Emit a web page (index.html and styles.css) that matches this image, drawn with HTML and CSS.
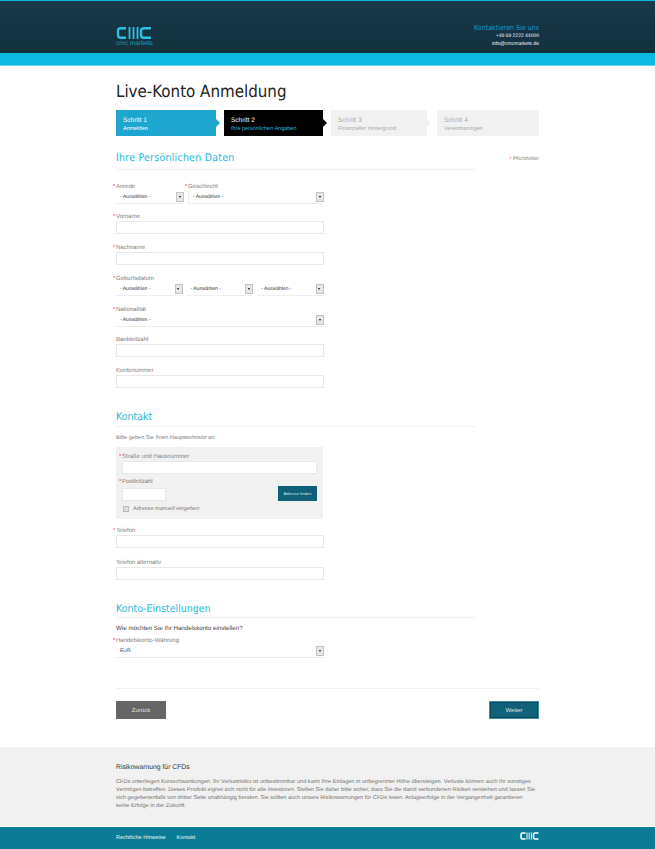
FILE: index.html
```html
<!DOCTYPE html>
<html lang="de">
<head>
    <meta charset="UTF-8">
    <title>Live-Konto Anmeldung</title>
    <link rel="stylesheet" href="styles.css">
</head>
<body>
    <!-- Header -->
    <header class="site-header">
        <div class="wrap header-inner">
            <div class="logo">
                <svg class="logo-mark" width="36" height="14" viewBox="0 0 36 14">
                    <path d="M10 2.200H5Q2 2.200 2 5V9Q2 11.800 5 11.800H10" fill="none" stroke="#2cc0e4" stroke-width="2.400"/>
                    <path d="M13.500 1V13M17.500 1V13M21.500 1V13" fill="none" stroke="#2cc0e4" stroke-width="1.800"/>
                    <path d="M35 2.200H28Q25 2.200 25 5V9Q25 11.800 28 11.800H35" fill="none" stroke="#2cc0e4" stroke-width="2.400"/>
                </svg>
                <span class="logo-text">cmc markets</span>
            </div>
            <div class="contact-box">
                <div class="contact-title">Kontaktieren Sie uns</div>
                <div>+49 69 2222 44000</div>
                <div>info@cmcmarkets.de</div>
            </div>
        </div>
    </header>
    <div class="header-band"></div>

    <main class="wrap">
        <h1>Live-Konto Anmeldung</h1>

        <!-- Steps -->
        <div class="steps">
            <div class="step step-done"><b>Schritt 1</b><span>Anmelden</span></div>
            <div class="step step-active"><b>Schritt 2</b><span>Ihre persönlichen Angaben</span></div>
            <div class="step step-third"><b>Schritt 3</b><span>Finanzieller Hintergrund</span></div>
            <div class="step step-last"><b>Schritt 4</b><span>Vereinbarungen</span></div>
        </div>

        <!-- Personal data -->
        <section class="personal">
            <div class="section-head head-first">
                <h2>Ihre Persönlichen Daten</h2>
                <div class="required-note"><i>*</i> Pflichtfelder</div>
            </div>
            <div class="row row-title">
                <div class="field field-title">
                    <label class="req">Anrede</label>
                    <div class="select"><span>- Auswählen -</span><em></em></div>
                </div>
                <div class="field field-gender">
                    <label class="req">Geschlecht</label>
                    <div class="select"><span>- Auswählen -</span><em></em></div>
                </div>
            </div>
            <div class="field gap-wide">
                <label class="req">Vorname</label>
                <div class="input"></div>
            </div>
            <div class="field gap-wide">
                <label class="req">Nachname</label>
                <div class="input"></div>
            </div>
            <div class="field gap-wide">
                <label class="req">Geburtsdatum</label>
                <div class="row row-date">
                    <div class="select"><span>- Auswählen -</span><em></em></div>
                    <div class="select"><span>- Auswählen -</span><em></em></div>
                    <div class="select"><span>- Auswählen -</span><em></em></div>
                </div>
            </div>
            <div class="field gap-date">
                <label class="req">Nationalität</label>
                <div class="select"><span>- Auswählen -</span><em></em></div>
            </div>
            <div class="field gap-wide">
                <label>Bankleitzahl</label>
                <div class="input"></div>
            </div>
            <div class="field gap-wide">
                <label>Kontonummer</label>
                <div class="input"></div>
            </div>
        </section>

        <!-- Contact -->
        <section class="contact">
            <div class="section-head"><h2>Kontakt</h2></div>
            <p class="hint">Bitte geben Sie Ihren Hauptwohnsitz an:</p>
            <div class="address-box">
                <div class="field">
                    <label class="req">Straße und Hausnummer</label>
                    <div class="input"></div>
                </div>
                <div class="field gap-zip">
                    <label class="req">Postleitzahl</label>
                    <div class="zip-row">
                        <div class="input input-zip"></div>
                        <button class="btn-find">Adresse finden</button>
                    </div>
                </div>
                <div class="manual"><span class="checkbox"></span>Adresse manuell eingeben</div>
            </div>
            <div class="field gap-phone">
                <label class="req">Telefon</label>
                <div class="input"></div>
            </div>
            <div class="field gap-date">
                <label>Telefon alternativ</label>
                <div class="input"></div>
            </div>
        </section>

        <!-- Account settings -->
        <section class="settings">
            <div class="section-head head-last"><h2>Konto-Einstellungen</h2></div>
            <p class="question">Wie möchten Sie Ihr Handelskonto einstellen?</p>
            <div class="field">
                <label class="req">Handelskonto-Währung</label>
                <div class="select"><span>EUR</span><em></em></div>
            </div>
        </section>

        <div class="actions">
            <button class="btn btn-back">Zurück</button>
            <button class="btn btn-next">Weiter</button>
        </div>
    </main>

    <!-- Risk warning -->
    <section class="risk">
        <div class="wrap">
            <h3>Risikowarnung für CFDs</h3>
            <p>CFDs unterliegen Kursschwankungen. Ihr Verlustrisiko ist unbestimmbar und kann Ihre Einlagen in unbegrenzter Höhe übersteigen. Verluste können auch Ihr sonstiges<br>Vermögen betreffen. Dieses Produkt eignet sich nicht für alle Investoren. Stellen Sie daher bitte sicher, dass Sie die damit verbundenen Risiken verstehen und lassen Sie<br>sich gegebenenfalls von dritter Seite unabhängig beraten. Sie sollten auch unsere Risikowarnungen für CFDs lesen. Anlageerfolge in der Vergangenheit garantieren<br>keine Erfolge in der Zukunft.</p>
        </div>
    </section>

    <footer class="site-footer">
        <div class="wrap footer-inner">
            <div class="footer-links"><a>Rechtliche Hinweise</a><a>Kontakt</a></div>
            <svg width="19" height="8" viewBox="0 0 19 8">
                <path d="M5.500 1H2.500Q1 1 1 2.500V5.500Q1 7 2.500 7H5.500" fill="none" stroke="#fff" stroke-width="1.500"/>
                <path d="M7 .5V7.500M9.200 .5V7.500M11.400 .5V7.500" fill="none" stroke="#fff"/>
                <path d="M18.500 1H15Q13.500 1 13.500 2.500V5.500Q13.500 7 15 7H18.500" fill="none" stroke="#fff" stroke-width="1.500"/>
            </svg>
        </div>
    </footer>
</body>
</html>
```

FILE: styles.css
```css
* {
    box-sizing: border-box;
}

body {
    margin: 0;
    font-family: 'Liberation Sans', Arial, sans-serif;
    font-size: 6px;
    color: #808080;
    background-color: #fff;
    text-rendering: geometricPrecision;
}

.wrap {
    width: 423px;
    margin: 0 auto;
}

/* Header */
.site-header {
    height: 53px;
    border-top: 1px solid #0fb5d8;
    background: linear-gradient(#17394a, #14303d);
}

.header-inner {
    display: flex;
    justify-content: space-between;
    align-items: flex-start;
}

.logo {
    margin-top: 25px;
    display: flex;
    flex-direction: column;
}

.logo-mark {
    display: block;
}

.logo-text {
    font-size: 6.500px;
    line-height: 7px;
    color: #1a9cbc;
}

.contact-box {
    margin-top: 23px;
    text-align: right;
    color: #fff;
    font-size: 5px;
    line-height: 7.500px;
}

.contact-title {
    font-family: 'DejaVu Sans Condensed', 'DejaVu Sans', sans-serif;
    font-size: 7px;
    line-height: 9px;
    color: #0f9fc4;
}

.header-band {
    height: 13px;
    background-color: #0cb9df;
    border-bottom: 1px solid #6fd3ea;
}

/* Titles */
h1 {
    margin: 13px 0 0;
    font-family: 'DejaVu Sans Condensed', 'DejaVu Sans', sans-serif;
    font-weight: normal;
    font-size: 16.800px;
    line-height: 24px;
    color: #222;
}

h2 {
    margin: 0;
    font-family: 'DejaVu Sans Condensed', 'DejaVu Sans', sans-serif;
    font-weight: normal;
    font-size: 10.500px;
    line-height: 18px;
    color: #1fb9dc;
}

.section-head {
    width: 359px;
    height: 19px;
    border-bottom: 1px solid #f1f1f1;
    position: relative;
}

.head-first {
    height: 21px;
}

.head-first h2 {
    letter-spacing: 0.25px;
}

.head-last {
    height: 18px;
}

.required-note {
    position: absolute;
    right: -64px;
    top: 7px;
    font-size: 5px;
    color: #888;
}

.required-note i,
.req::before {
    color: #e8304a;
    font-style: normal;
}

/* Steps */
.steps {
    margin-top: 7px;
    display: flex;
}

.step {
    height: 26px;
    padding: 6px 7px 0;
    position: relative;
    font-size: 5.500px;
    line-height: 8px;
}

.step b {
    display: block;
    font-weight: normal;
    font-size: 6.500px;
    line-height: 9px;
}

.step::after {
    content: "";
    position: absolute;
    left: 100%;
    top: 9px;
    border-left: 4px solid #f1f1f1;
    border-top: 4px solid transparent;
    border-bottom: 4px solid transparent;
}

.step-done {
    width: 100px;
    margin-right: 8px;
    background-color: #1fa6cf;
    color: #fff;
}

.step-done::after {
    border-left-color: #1fa6cf;
}

.step-active {
    width: 99px;
    margin-right: 8px;
    background-color: #000;
    color: #fff;
}

.step-active span {
    color: #1fb9dc;
}

.step-active::after {
    border-left-color: #000;
}

.step-third {
    width: 96px;
    margin-right: 10px;
    background-color: #f1f1f1;
    color: #aaa;
}

.step-last {
    flex: 1;
    background-color: #f1f1f1;
    color: #aaa;
}

.step-last::after {
    display: none;
}

/* Form */
.personal {
    margin-top: 13px;
}

.contact,
.settings {
    margin-top: 20px;
}

.field label {
    display: block;
    height: 9px;
    line-height: 10px;
    position: relative;
}

.req::before {
    content: "*";
    position: absolute;
    left: -3px;
    top: 0;
}

.input {
    width: 208px;
    height: 13px;
    background-color: #fff;
    border: 1px solid #e8e8e8;
}

.select {
    height: 12px;
    width: 208px;
    display: flex;
    justify-content: space-between;
    align-items: center;
    padding-left: 4px;
    background-color: #fff;
    box-shadow: 0 1px 0 #eee;
    font-size: 5px;
    color: #333;
}

.select em {
    width: 8px;
    height: 10px;
    background-color: #e6e6e6;
    border: 1px solid #c4c4c4;
    position: relative;
}

.select em::after {
    content: "";
    position: absolute;
    left: 1.500px;
    top: 3px;
    border-top: 2px solid #111;
    border-left: 1.500px solid transparent;
    border-right: 1.500px solid transparent;
}

.row {
    display: flex;
}

.row-title {
    margin-top: 12px;
}

.field-title {
    width: 68px;
    margin-right: 4px;
}

.field-title .select {
    width: 68px;
}

.field-gender {
    width: 136px;
}

.field-gender .select {
    width: 136px;
    border-left: 1px solid #eee;
}

.row-date {
    gap: 4px;
    width: 208px;
}

.row-date .select {
    width: 66.600px;
}

.gap-wide {
    margin-top: 9px;
}

.gap-date {
    margin-top: 10px;
}

.hint {
    margin: 7px 0 0;
    font-size: 5.600px;
    line-height: 8px;
}

.address-box {
    margin-top: 5px;
    width: 207px;
    height: 72px;
    padding: 5px 6px 0;
    background-color: #f1f1f1;
}

.address-box .input {
    width: 195px;
}

.address-box .input-zip {
    width: 44px;
}

.gap-zip {
    margin-top: 3px;
}

.zip-row {
    display: flex;
    justify-content: space-between;
    align-items: flex-end;
}

.btn-find {
    width: 39px;
    height: 15px;
    padding: 0;
    border: none;
    background-color: #0f6078;
    color: #d5e5ea;
    font-family: inherit;
    font-size: 4.200px;
}

.manual {
    margin-top: 4px;
    display: flex;
    align-items: center;
    font-size: 5.600px;
    line-height: 8px;
}

.checkbox {
    width: 6px;
    height: 6px;
    margin: 0 4px 0 1px;
    background-color: #ddd;
    border: 1px solid #bbb;
}

.gap-phone {
    margin-top: 7px;
}

.question {
    margin: 7px 0 0;
    font-size: 6.200px;
    line-height: 8px;
    color: #444;
}

.settings .field {
    margin-top: 3px;
}

/* Buttons */
.actions {
    margin-top: 31px;
    padding-top: 12px;
    border-top: 1px solid #f1f1f1;
    display: flex;
    justify-content: space-between;
}

.btn {
    width: 50px;
    height: 18px;
    padding: 0;
    border: none;
    color: #dfe7ea;
    font-family: inherit;
    font-size: 6px;
}

.btn-back {
    background-color: #666;
}

.btn-next {
    background-color: #0f6078;
    border: 1px solid #3f8ea3;
    box-shadow: inset 0 0 0 1px #0a4a5e;
}

/* Risk warning */
.risk {
    margin-top: 28px;
    height: 79px;
    padding-top: 16px;
    background-color: #f1f1f1;
}

.risk h3 {
    margin: 0;
    font-weight: normal;
    font-size: 6.800px;
    line-height: 10px;
    color: #333;
}

.risk p {
    margin: 5px 0 0;
    font-size: 5.600px;
    line-height: 8px;
    color: #777;
}

/* Footer */
.site-footer {
    margin-top: 1px;
    height: 22px;
    background-color: #0b7c95;
}

.footer-inner {
    padding-top: 5px;
    display: flex;
    justify-content: space-between;
}

.footer-links {
    margin-top: 2px;
    display: flex;
    gap: 11px;
    color: #e6f2f5;
    font-size: 5.500px;
    line-height: 8px;
}
```
